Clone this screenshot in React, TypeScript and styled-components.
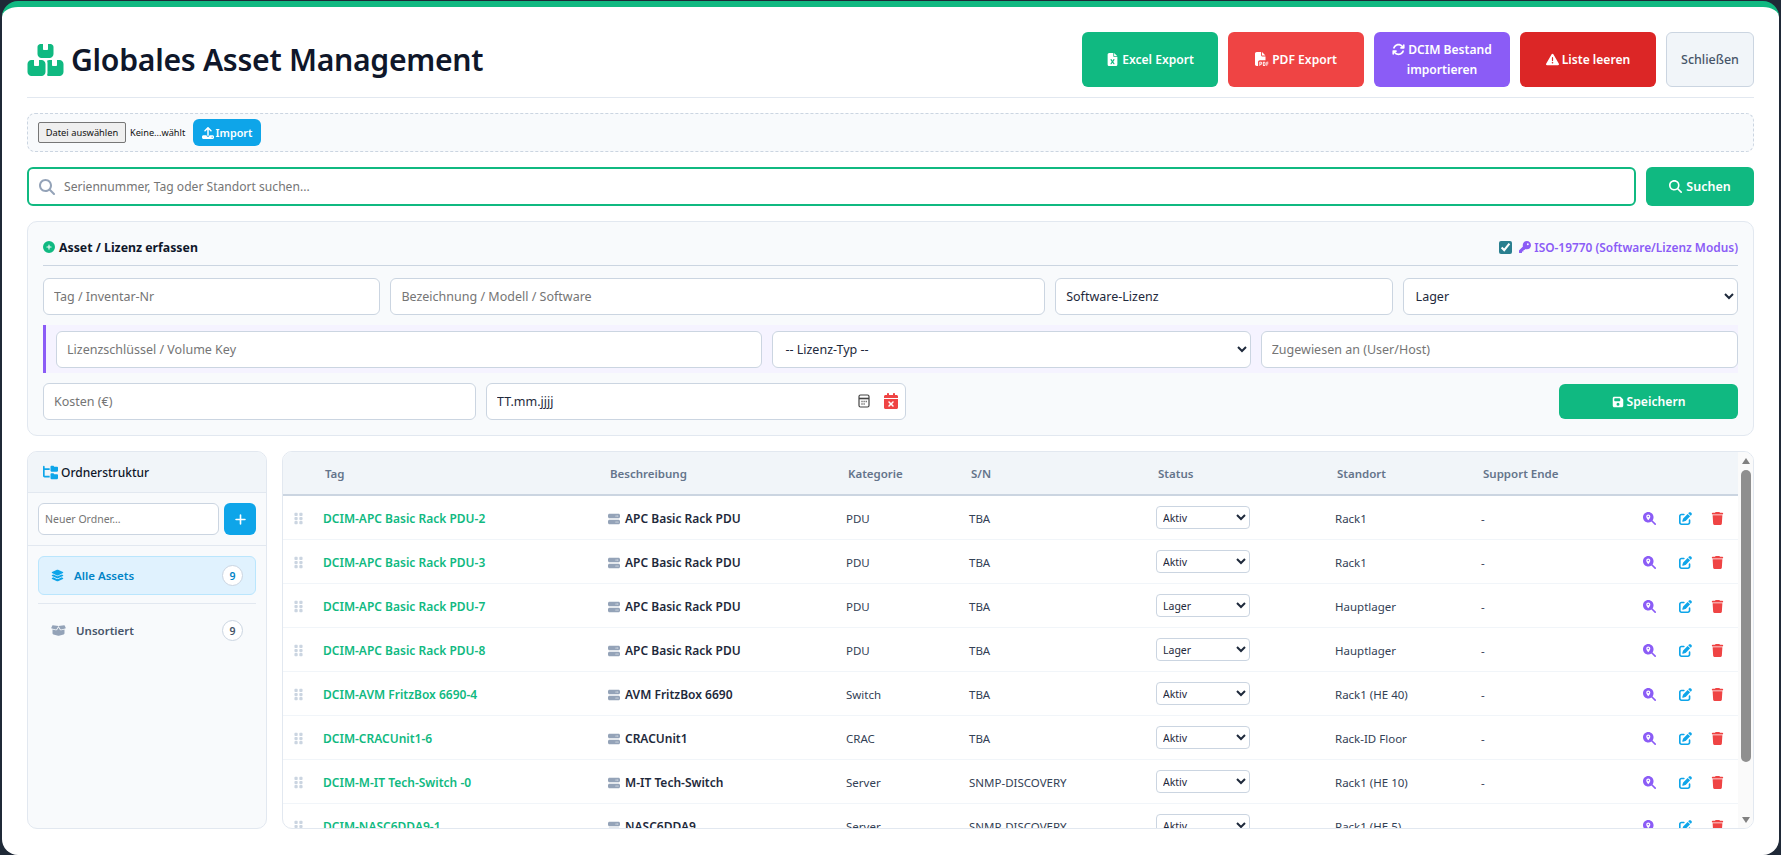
import React from 'react';
import styled, { createGlobalStyle } from 'styled-components';
import {
  FaBoxesStacked, FaFileExcel, FaFilePdf, FaArrowsRotate, FaTriangleExclamation, FaUpload, FaMagnifyingGlass,
  FaCirclePlus, FaKey, FaFloppyDisk, FaCalendarXmark, FaLayerGroup, FaBoxOpen, FaServer, FaGripVertical,
  FaMagnifyingGlassLocation, FaPenToSquare, FaTrash, FaPlus, FaFolderTree,
} from 'react-icons/fa6';

const UI = `"Noto Sans", "Open Sans", sans-serif`;

const Global = createGlobalStyle`
  html, body { margin: 0; height: 100%; background: #1e293b; overflow: hidden; }
  #root { height: 100%; }
  * { box-sizing: border-box; }
  body { font-family: ${UI}; }
`;

const Backdrop = styled.div`
  height: 100vh;
  padding: 1px 2px 0;
  background: #1f2937;
`;
const Modal = styled.div`
  height: 100%;
  background: #fff;
  border-top: 6px solid #10b981;
  border-radius: 16px;
  padding: 25px 25px 26px;
  display: flex;
  flex-direction: column;
`;
const Header = styled.header`
  display: flex;
  align-items: center;
  justify-content: space-between;
  height: 66px;
  flex: none;
  padding-bottom: 10px;
  border-bottom: 1px solid #e2e8f0;
  margin-bottom: 15px;
`;
const Title = styled.h1`
  margin: 0;
  display: flex;
  align-items: center;
  gap: 7px;
  font-size: 30.2px;
  font-weight: 600;
  letter-spacing: -0.3px;
  color: #0f172a;
  svg { color: #10b981; width: 37px; height: 32px; }
`;
const Actions = styled.div`
  display: flex;
  gap: 10px;
  height: 55px;
`;
const HeadButton = styled.button<{ $bg: string }>`
  width: 136px;
  border: 0;
  border-radius: 6px;
  background: ${p => p.$bg};
  color: #fff;
  font: 600 12.1px/19.5px ${UI};
  padding: 0 12px;
  svg { vertical-align: -2px; margin-right: 3px; }
`;
const CloseButton = styled.button`
  width: 88px;
  border: 1px solid #cbd5e1;
  border-radius: 6px;
  background: #f1f5f9;
  color: #475569;
  font: 500 12.5px ${UI};
  padding: 0;
`;
const ImportBar = styled.div`
  height: 39px;
  flex: none;
  display: flex;
  align-items: center;
  padding: 0 10px;
  gap: 4px;
  background: #f8fafc;
  border: 1px dashed #cbd5e1;
  border-radius: 8px;
  margin-bottom: 15px;
`;
const FileButton = styled.button`
  width: 88px;
  height: 21px;
  border: 1px solid #767676;
  border-radius: 2px;
  background: #efefef;
  color: #111;
  font: 9.3px ${UI};
  padding: 0;
`;
const FileName = styled.span`
  width: 59px;
  font-size: 9.2px;
  color: #111;
`;
const ImportButton = styled.button`
  width: 68px;
  height: 27px;
  border: 0;
  border-radius: 6px;
  background: #0ea5e9;
  color: #fff;
  font: 600 10.8px ${UI};
  padding: 0;
  svg { vertical-align: -1.5px; margin-right: 2px; }
`;
const SearchRow = styled.div`
  display: flex;
  gap: 10px;
  height: 39px;
  flex: none;
  margin-bottom: 15px;
`;
const SearchField = styled.label`
  flex: 1;
  display: flex;
  align-items: center;
  gap: 9px;
  padding: 0 10px;
  border: 2px solid #10b981;
  border-radius: 6px;
  background: #fff;
  svg { color: #94a3b8; flex: none; }
`;
const SearchInput = styled.input`
  flex: 1;
  border: 0;
  outline: 0;
  padding: 0;
  font: 12.1px ${UI};
  background: transparent;
`;
const SearchButton = styled.button`
  width: 108px;
  border: 0;
  border-radius: 6px;
  background: #10b981;
  color: #fff;
  font: 600 12.5px ${UI};
  svg { vertical-align: -2px; margin-right: 4px; }
`;
const FormPanel = styled.section`
  height: 215px;
  flex: none;
  background: #f8fafc;
  border: 1px solid #e2e8f0;
  border-radius: 10px;
  padding: 16px 15px;
  margin-bottom: 15px;
  display: flex;
  flex-direction: column;
  gap: 10px;
`;
const FormHead = styled.div`
  display: flex;
  align-items: center;
  justify-content: space-between;
  height: 28px;
  flex: none;
  padding-bottom: 9px;
  border-bottom: 1px solid #cbd5e1;
  margin-bottom: 2px;
`;
const FormTitle = styled.div`
  font-size: 12.3px;
  font-weight: 700;
  color: #0f172a;
  display: flex;
  align-items: center;
  gap: 4px;
  svg { color: #10b981; }
`;
const IsoLabel = styled.label`
  display: flex;
  align-items: center;
  gap: 5px;
  font-size: 11.9px;
  font-weight: 600;
  color: #8b5cf6;
  input { margin: 0 2px 0 0; width: 13px; height: 13px; accent-color: #2a7f8f; }
  svg { margin-right: -2px; }
`;
const Row = styled.div<{ $cols: string }>`
  display: grid;
  grid-template-columns: ${p => p.$cols};
  gap: 10px;
  height: 37px;
  flex: none;
`;
const LicenseBand = styled(Row)`
  height: 48px;
  align-items: center;
  padding-left: 10px;
  background: #f5f3ff;
  border-left: 3px solid #8b5cf6;
`;
const Field = styled.input`
  width: 100%;
  height: 37px;
  padding: 0 10px;
  border: 1px solid #cbd5e1;
  border-radius: 6px;
  background: #fff;
  color: #1e293b;
  font: 12.5px ${UI};
  outline: 0;
`;
const SelectField = styled.select`
  width: 100%;
  height: 37px;
  padding: 0 8px;
  border: 1px solid #cbd5e1;
  border-radius: 6px;
  background: #fff;
  color: #1e293b;
  font: 12.5px ${UI};
`;
const DateBox = styled.div`
  position: relative;
`;
const DateIcons = styled.div`
  position: absolute;
  right: 7px;
  top: 10px;
  display: flex;
  gap: 13px;
  align-items: center;
`;
const SaveRow = styled.div`
  display: flex;
  justify-content: flex-end;
  align-items: center;
`;
const SaveButton = styled.button`
  width: 179px;
  height: 35px;
  border: 0;
  border-radius: 6px;
  background: #10b981;
  color: #fff;
  font: 600 12.2px ${UI};
  svg { vertical-align: -1.5px; margin-right: 3px; }
`;
const Lower = styled.div`
  flex: 1;
  min-height: 0;
  display: flex;
  gap: 15px;
`;
const Sidebar = styled.aside`
  width: 240px;
  flex: none;
  background: #f8fafc;
  border: 1px solid #e2e8f0;
  border-radius: 10px;
  overflow: hidden;
  display: flex;
  flex-direction: column;
`;
const SideHead = styled.div`
  height: 41px;
  flex: none;
  display: flex;
  align-items: center;
  gap: 3px;
  padding-left: 15px;
  background: #f1f5f9;
  border-bottom: 1px solid #e2e8f0;
  font-size: 12px;
  font-weight: 500;
  color: #0f172a;
  svg { color: #0ea5e9; }
`;
const NewFolder = styled.div`
  height: 53px;
  flex: none;
  display: flex;
  align-items: center;
  gap: 5px;
  padding: 0 10px;
  border-bottom: 1px solid #e2e8f0;
`;
const FolderInput = styled.input`
  flex: 1;
  min-width: 0;
  height: 32px;
  padding: 0 6px;
  border: 1px solid #cbd5e1;
  border-radius: 6px;
  background: #fff;
  font: 10.5px ${UI};
  outline: 0;
`;
const AddButton = styled.button`
  width: 32px;
  height: 32px;
  border: 0;
  border-radius: 6px;
  background: #0ea5e9;
  color: #fff;
  padding: 0;
  display: grid;
  place-items: center;
`;
const FolderList = styled.div`
  padding: 10px;
`;
const FolderItem = styled.div<{ $active?: boolean }>`
  height: 39px;
  display: flex;
  align-items: center;
  padding: 0 12px;
  border: 1px solid ${p => (p.$active ? '#bae6fd' : 'transparent')};
  border-radius: 6px;
  background: ${p => (p.$active ? '#e0f2fe' : 'transparent')};
  color: ${p => (p.$active ? '#0284c7' : '#475569')};
  font-size: 11.5px;
  font-weight: 600;
  svg { color: ${p => (p.$active ? '#0ea5e9' : '#94a3b8')}; }
`;
const FolderName = styled.span<{ $shift: number }>`
  flex: 1;
  margin-left: ${p => p.$shift}px;
`;
const Count = styled.span`
  width: 21px;
  height: 21px;
  border-radius: 50%;
  display: grid;
  place-items: center;
  border: 1px solid #cbd5e1;
  background: #fff;
  font-size: 10.5px;
`;
const FolderDivider = styled.hr`
  border: 0;
  border-top: 1px solid #e2e8f0;
  margin: 8px 0 7px;
`;
const TableWrap = styled.div`
  flex: 1;
  min-width: 0;
  display: flex;
  background: #fff;
  border: 1px solid #e2e8f0;
  border-radius: 10px;
  overflow: hidden;
`;
const TableScroll = styled.div`
  flex: 1;
  min-width: 0;
  overflow: hidden;
`;
const Rail = styled.div`
  width: 15px;
  flex: none;
  display: flex;
  flex-direction: column;
  background: #fafafa;
`;
const RailArrow = styled.div<{ $down?: boolean }>`
  height: 17px;
  flex: none;
  display: grid;
  place-items: center;
  &::before {
    content: '';
    border-left: 4px solid transparent;
    border-right: 4px solid transparent;
    ${p => (p.$down ? 'border-top' : 'border-bottom')}: 6px solid #808080;
  }
`;
const RailTrack = styled.div`
  flex: 1;
  padding: 1px 2px 0 3px;
`;
const RailThumb = styled.div`
  height: 292px;
  background: #8f8f8f;
  border-radius: 5px;
`;
const Table = styled.table`
  width: 100%;
  table-layout: fixed;
  border-collapse: separate;
  border-spacing: 0;
  font-size: 11.5px;
`;
const Th = styled.th`
  height: 44px;
  padding: 0 0 0 4px;
  text-align: left;
  background: #f1f5f9;
  border-bottom: 2px solid #cbd5e1;
  color: #64748b;
  font-size: 11.5px;
  font-weight: 600;
`;
const Td = styled.td`
  height: 44px;
  padding: 2px 0 0 2px;
  border-bottom: 1px solid #f1f5f9;
  color: #334155;
  white-space: nowrap;
`;
const GripCell = styled(Td)`
  padding: 1px 0 0 9px;
  color: #cbd5e1;
  svg { display: block; }
`;
const TagCell = styled(Td)`
  color: #10b981;
  font-size: 12px;
  font-weight: 600;
`;
const NameCell = styled(Td)`
  color: #1e293b;
  font-size: 12px;
  font-weight: 600;
  svg { color: #94a3b8; vertical-align: -2px; margin-right: 5px; }
`;
const ControlCell = styled(Td)`
  padding-top: 0;
`;
const StatusSelect = styled.select`
  display: block;
  width: 94px;
  height: 23px;
  padding: 0 2px;
  border: 1px solid #cbd5e1;
  border-radius: 4px;
  background: #fff;
  color: #1e293b;
  font: 10.5px ${UI};
`;
const RowActions = styled.div`
  display: flex;
  justify-content: flex-end;
  align-items: center;
  padding-right: 14px;
`;
const RowIcon = styled.span<{ $color: string; $gap: number }>`
  display: grid;
  color: ${p => p.$color};
  margin-left: ${p => p.$gap}px;
`;

const widths = [38, 285, 238, 123, 187, 179, 146, 130, 129];

type Asset = [string, string, string, string, string, string];
const assets: Asset[] = [
  ['DCIM-APC Basic Rack PDU-2', 'APC Basic Rack PDU', 'PDU', 'TBA', 'Aktiv', 'Rack1'],
  ['DCIM-APC Basic Rack PDU-3', 'APC Basic Rack PDU', 'PDU', 'TBA', 'Aktiv', 'Rack1'],
  ['DCIM-APC Basic Rack PDU-7', 'APC Basic Rack PDU', 'PDU', 'TBA', 'Lager', 'Hauptlager'],
  ['DCIM-APC Basic Rack PDU-8', 'APC Basic Rack PDU', 'PDU', 'TBA', 'Lager', 'Hauptlager'],
  ['DCIM-AVM FritzBox 6690-4', 'AVM FritzBox 6690', 'Switch', 'TBA', 'Aktiv', 'Rack1 (HE 40)'],
  ['DCIM-CRACUnit1-6', 'CRACUnit1', 'CRAC', 'TBA', 'Aktiv', 'Rack-ID Floor'],
  ['DCIM-M-IT Tech-Switch -0', 'M-IT Tech-Switch', 'Server', 'SNMP-DISCOVERY', 'Aktiv', 'Rack1 (HE 10)'],
  ['DCIM-NASC6DDA9-1', 'NASC6DDA9', 'Server', 'SNMP-DISCOVERY', 'Aktiv', 'Rack1 (HE 5)'],
];

const PickerIcon = () => (
  <svg width="12" height="14" viewBox="0 0 12 14" fill="none" stroke="#444" strokeWidth="1.2">
    <rect x="1" y="1" width="10" height="12" rx="1.5" />
    <path d="M1 4.5h10" strokeWidth="1.6" />
    <path d="M3.5 7.5h1M5.6 7.5h1M7.7 7.5h1M3.5 10h1M5.6 10h1" strokeWidth="1.3" />
  </svg>
);

export default function App() {
  return (
    <>
      <Global />
      <Backdrop>
        <Modal>
          <Header>
            <Title><FaBoxesStacked />Globales Asset Management</Title>
            <Actions>
              <HeadButton $bg="#10b981"><FaFileExcel size={13} />Excel Export</HeadButton>
              <HeadButton $bg="#ef4444"><FaFilePdf size={14} />PDF Export</HeadButton>
              <HeadButton $bg="#8b5cf6"><FaArrowsRotate size={13} />DCIM Bestand importieren</HeadButton>
              <HeadButton $bg="#dc2626"><FaTriangleExclamation size={13} />Liste leeren</HeadButton>
              <CloseButton>Schließen</CloseButton>
            </Actions>
          </Header>

          <ImportBar>
            <FileButton>Datei auswählen</FileButton>
            <FileName>Keine...wählt</FileName>
            <ImportButton><FaUpload size={12} />Import</ImportButton>
          </ImportBar>

          <SearchRow>
            <SearchField>
              <FaMagnifyingGlass size={16} />
              <SearchInput placeholder="Seriennummer, Tag oder Standort suchen..." />
            </SearchField>
            <SearchButton><FaMagnifyingGlass size={13} />Suchen</SearchButton>
          </SearchRow>

          <FormPanel>
            <FormHead>
              <FormTitle><FaCirclePlus size={12} />Asset / Lizenz erfassen</FormTitle>
              <IsoLabel>
                <input type="checkbox" defaultChecked />
                <FaKey size={12} />ISO-19770 (Software/Lizenz Modus)
              </IsoLabel>
            </FormHead>
            <Row $cols="337fr 654fr 337fr 335fr">
              <Field placeholder="Tag / Inventar-Nr" />
              <Field placeholder="Bezeichnung / Modell / Software" />
              <Field defaultValue="Software-Lizenz" />
              <SelectField defaultValue="Lager"><option>Lager</option></SelectField>
            </Row>
            <LicenseBand $cols="706fr 478fr 477fr">
              <Field placeholder="Lizenzschlüssel / Volume Key" />
              <SelectField><option>-- Lizenz-Typ --</option></SelectField>
              <Field placeholder="Zugewiesen an (User/Host)" />
            </LicenseBand>
            <Row $cols="433px 420px 1fr">
              <Field placeholder="Kosten (€)" />
              <DateBox>
                <Field defaultValue="TT.mm.jjjj" />
                <DateIcons>
                  <PickerIcon />
                  <FaCalendarXmark size={16} color="#ef4444" />
                </DateIcons>
              </DateBox>
              <SaveRow><SaveButton><FaFloppyDisk size={12} />Speichern</SaveButton></SaveRow>
            </Row>
          </FormPanel>

          <Lower>
            <Sidebar>
              <SideHead><FaFolderTree size={15} />Ordnerstruktur</SideHead>
              <NewFolder>
                <FolderInput placeholder="Neuer Ordner..." />
                <AddButton><FaPlus size={13} /></AddButton>
              </NewFolder>
              <FolderList>
                <FolderItem $active>
                  <FaLayerGroup size={13} />
                  <FolderName $shift={10}>Alle Assets</FolderName>
                  <Count>9</Count>
                </FolderItem>
                <FolderDivider />
                <FolderItem>
                  <FaBoxOpen size={15} />
                  <FolderName $shift={10}>Unsortiert</FolderName>
                  <Count>9</Count>
                </FolderItem>
              </FolderList>
            </Sidebar>

            <TableWrap>
              <TableScroll>
                <Table>
                  <colgroup>
                    {widths.map((w, i) => <col key={i} style={{ width: w }} />)}
                  </colgroup>
                  <thead>
                    <tr>
                      <Th />
                      <Th>Tag</Th>
                      <Th>Beschreibung</Th>
                      <Th>Kategorie</Th>
                      <Th>S/N</Th>
                      <Th>Status</Th>
                      <Th>Standort</Th>
                      <Th>Support Ende</Th>
                      <Th />
                    </tr>
                  </thead>
                  <tbody>
                    {assets.map(a => (
                      <tr key={a[0]}>
                        <GripCell><FaGripVertical size={13} /></GripCell>
                        <TagCell>{a[0]}</TagCell>
                        <NameCell><FaServer size={12} />{a[1]}</NameCell>
                        <Td>{a[2]}</Td>
                        <Td>{a[3]}</Td>
                        <ControlCell>
                          <StatusSelect defaultValue={a[4]}>
                            <option>Aktiv</option>
                            <option>Lager</option>
                          </StatusSelect>
                        </ControlCell>
                        <Td>{a[5]}</Td>
                        <Td>-</Td>
                        <Td>
                          <RowActions>
                            <RowIcon $color="#8b5cf6" $gap={0}><FaMagnifyingGlassLocation size={13} /></RowIcon>
                            <RowIcon $color="#0ea5e9" $gap={23}><FaPenToSquare size={13} /></RowIcon>
                            <RowIcon $color="#ef4444" $gap={19}><FaTrash size={13} /></RowIcon>
                          </RowActions>
                        </Td>
                      </tr>
                    ))}
                  </tbody>
                </Table>
              </TableScroll>
              <Rail>
                <RailArrow />
                <RailTrack><RailThumb /></RailTrack>
                <RailArrow $down />
              </Rail>
            </TableWrap>
          </Lower>
        </Modal>
      </Backdrop>
    </>
  );
}
